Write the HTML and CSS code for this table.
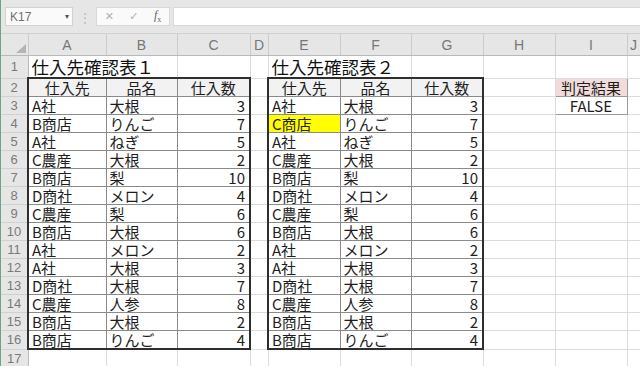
FILE: index.html
```html
<!DOCTYPE html>
<html lang="ja">
<head>
  <meta charset="UTF-8">
  <meta name="viewport" content="width=device-width, initial-scale=1.0">
  <title>仕入先確認表</title>
  <link rel="stylesheet" href="styles.css">
</head>
<body>
  <div class="app">
    <div class="formula-bar">
      <div class="name-box"><span>K17</span><span class="drop">&#9662;</span></div>
      <div class="grip">&#8942;</div>
      <div class="fx-buttons">
        <span class="fx-btn">&#x2715;</span>
        <span class="fx-btn">&#x2713;</span>
        <span class="fx-btn fx"><i>f</i><sub>x</sub></span>
      </div>
      <div class="formula-input"></div>
    </div>

    <table class="sheet">
      <colgroup>
        <col style="width:27px">
        <col style="width:78px"><col style="width:71px"><col style="width:73px">
        <col style="width:18px">
        <col style="width:72px"><col style="width:71px"><col style="width:72px">
        <col style="width:72px"><col style="width:72px"><col style="width:13px">
      </colgroup>
      <tr class="col-row">
        <th class="corner"><svg width="10" height="9" viewBox="0 0 10 9"><polygon points="10,0 10,9 0,9" fill="#b4b4b4"/></svg></th>
        <th class="col">A</th><th class="col">B</th><th class="col">C</th><th class="col">D</th>
        <th class="col">E</th><th class="col">F</th><th class="col">G</th><th class="col">H</th>
        <th class="col">I</th><th class="col">J</th>
      </tr>
      <tr class="title-row">
        <th class="rh">1</th>
        <td colspan="2" class="title">仕入先確認表１</td><td></td><td></td>
        <td colspan="2" class="title">仕入先確認表２</td><td></td><td></td><td></td><td></td>
      </tr>
      <tr class="head-row">
        <th class="rh">2</th>
        <td class="c hd t l">仕入先</td><td class="c hd t">品名</td><td class="c hd t r">仕入数</td><td></td>
        <td class="c hd t l">仕入先</td><td class="c hd t">品名</td><td class="c hd t r">仕入数</td><td></td>
        <td class="judge judge-head">判定結果</td><td></td>
      </tr>
      <tr>
        <th class="rh">3</th>
        <td class="c l">A社</td><td class="c">大根</td><td class="c num r">3</td><td></td>
        <td class="c l">A社</td><td class="c">大根</td><td class="c num r">3</td><td></td>
        <td class="judge">FALSE</td><td></td>
      </tr>
      <tr>
        <th class="rh">4</th>
        <td class="c l">B商店</td><td class="c">りんご</td><td class="c num r">7</td><td></td>
        <td class="c l diff">C商店</td><td class="c">りんご</td><td class="c num r">7</td><td></td><td></td><td></td>
      </tr>
      <tr>
        <th class="rh">5</th>
        <td class="c l">A社</td><td class="c">ねぎ</td><td class="c num r">5</td><td></td>
        <td class="c l">A社</td><td class="c">ねぎ</td><td class="c num r">5</td><td></td><td></td><td></td>
      </tr>
      <tr>
        <th class="rh">6</th>
        <td class="c l">C農産</td><td class="c">大根</td><td class="c num r">2</td><td></td>
        <td class="c l">C農産</td><td class="c">大根</td><td class="c num r">2</td><td></td><td></td><td></td>
      </tr>
      <tr>
        <th class="rh">7</th>
        <td class="c l">B商店</td><td class="c">梨</td><td class="c num r">10</td><td></td>
        <td class="c l">B商店</td><td class="c">梨</td><td class="c num r">10</td><td></td><td></td><td></td>
      </tr>
      <tr>
        <th class="rh">8</th>
        <td class="c l">D商社</td><td class="c">メロン</td><td class="c num r">4</td><td></td>
        <td class="c l">D商社</td><td class="c">メロン</td><td class="c num r">4</td><td></td><td></td><td></td>
      </tr>
      <tr>
        <th class="rh">9</th>
        <td class="c l">C農産</td><td class="c">梨</td><td class="c num r">6</td><td></td>
        <td class="c l">C農産</td><td class="c">梨</td><td class="c num r">6</td><td></td><td></td><td></td>
      </tr>
      <tr>
        <th class="rh">10</th>
        <td class="c l">B商店</td><td class="c">大根</td><td class="c num r">6</td><td></td>
        <td class="c l">B商店</td><td class="c">大根</td><td class="c num r">6</td><td></td><td></td><td></td>
      </tr>
      <tr>
        <th class="rh">11</th>
        <td class="c l">A社</td><td class="c">メロン</td><td class="c num r">2</td><td></td>
        <td class="c l">A社</td><td class="c">メロン</td><td class="c num r">2</td><td></td><td></td><td></td>
      </tr>
      <tr>
        <th class="rh">12</th>
        <td class="c l">A社</td><td class="c">大根</td><td class="c num r">3</td><td></td>
        <td class="c l">A社</td><td class="c">大根</td><td class="c num r">3</td><td></td><td></td><td></td>
      </tr>
      <tr>
        <th class="rh">13</th>
        <td class="c l">D商社</td><td class="c">大根</td><td class="c num r">7</td><td></td>
        <td class="c l">D商社</td><td class="c">大根</td><td class="c num r">7</td><td></td><td></td><td></td>
      </tr>
      <tr>
        <th class="rh">14</th>
        <td class="c l">C農産</td><td class="c">人参</td><td class="c num r">8</td><td></td>
        <td class="c l">C農産</td><td class="c">人参</td><td class="c num r">8</td><td></td><td></td><td></td>
      </tr>
      <tr>
        <th class="rh">15</th>
        <td class="c l">B商店</td><td class="c">大根</td><td class="c num r">2</td><td></td>
        <td class="c l">B商店</td><td class="c">大根</td><td class="c num r">2</td><td></td><td></td><td></td>
      </tr>
      <tr>
        <th class="rh">16</th>
        <td class="c l b">B商店</td><td class="c b">りんご</td><td class="c num r b">4</td><td></td>
        <td class="c l b">B商店</td><td class="c b">りんご</td><td class="c num r b">4</td><td></td><td></td><td></td>
      </tr>
      <tr>
        <th class="rh">17</th>
        <td></td><td></td><td></td><td></td><td></td><td></td><td></td><td></td><td></td><td></td>
      </tr>
    </table>
  </div>
</body>
</html>
```

FILE: styles.css
```css
body {
    margin: 0;
    background: #ffffff;
    font-family: "Noto Sans CJK JP", "Liberation Sans", sans-serif;
    overflow: hidden;
}
.app {
    width: 639px;
    height: 366px;
    border-left: 1px solid #6fa381;
    overflow: hidden;
}

/* formula bar */
.formula-bar {
    display: flex;
    align-items: center;
    height: 34px;
    padding: 0 0 0 4px;
    background: #e6e6e6;
    box-sizing: border-box;
    border-bottom: 1px solid #d0d0d0;
}
.name-box {
    display: flex;
    justify-content: space-between;
    align-items: center;
    width: 68px;
    height: 19px;
    padding: 0 3px 0 4px;
    box-sizing: border-box;
    background: #fafafa;
    border: 1px solid #d2d2d2;
    font-family: "Liberation Sans", sans-serif;
    font-size: 12px;
    color: #707070;
}
.drop {
    font-size: 8px;
    color: #555;
}
.grip {
    width: 23px;
    text-align: center;
    color: #b8b8b8;
    font-size: 12px;
}
.fx-buttons {
    display: flex;
    align-items: center;
    justify-content: space-around;
    width: 74px;
    height: 19px;
    background: #fafafa;
    border: 1px solid #d8d8d8;
    box-sizing: border-box;
    color: #b0b0b0;
    font-family: "DejaVu Sans", sans-serif;
    font-size: 11px;
}
.fx-btn.fx {
    color: #666;
    font-family: "Liberation Serif", serif;
    font-size: 12px;
}
.fx-btn.fx sub {
    font-size: 8px;
}
.formula-input {
    flex: 1;
    height: 19px;
    margin-left: 3px;
    background: #ffffff;
    border: 1px solid #d8d8d8;
    border-right: none;
    box-sizing: border-box;
}

/* grid */
.sheet {
    border-collapse: collapse;
    table-layout: fixed;
    width: 639px;
    font-size: 15px;
    color: #1e1e1e;
}
.sheet td {
    border: 1px solid #dcdcdc;
    height: 17px;
    padding: 0 3px;
    line-height: 17px;
    white-space: nowrap;
    overflow: visible;
    vertical-align: bottom;
}
.col-row th {
    height: 19px;
    background: #e6e6e6;
    border-right: 1px solid #cbcbcb;
    border-bottom: 1px solid #b9b9b9;
    font-family: "Liberation Sans", sans-serif;
    font-weight: normal;
    font-size: 14px;
    color: #777;
    padding: 0;
}
.col-row .corner {
    text-align: right;
    vertical-align: bottom;
    padding: 0 2px 2px 0;
    line-height: 0;
}
.rh {
    background: #e6e6e6;
    border-right: 1px solid #b9b9b9;
    border-bottom: 1px solid #d0d0d0;
    font-family: "Liberation Sans", sans-serif;
    font-weight: normal;
    font-size: 13px;
    color: #7a7a7a;
    padding: 0;
    text-align: center;
}
.sheet .title-row td {
    height: 21px;
}
.sheet .head-row td {
    height: 16px;
}
.sheet .title {
    font-size: 17.5px;
    line-height: 21px;
    color: #111;
}

/* table cells */
.sheet .c {
    border: 1px solid #8a8a8a;
}
.sheet .hd {
    background: #f2f2f2;
    text-align: center;
}
.sheet .num {
    text-align: right;
    padding-right: 4px;
}
.sheet .t { border-top: 2px solid #2e2e2e; }
.sheet .b { border-bottom: 2px solid #2e2e2e; }
.sheet .l { border-left: 2px solid #2e2e2e; }
.sheet .r { border-right: 2px solid #2e2e2e; }
.sheet .diff {
    background: #ffff00;
}
.sheet .judge {
    border: 1px solid #9a9a9a;
    text-align: center;
}
.sheet .judge-head {
    background: #f2dcdb;
}
```
